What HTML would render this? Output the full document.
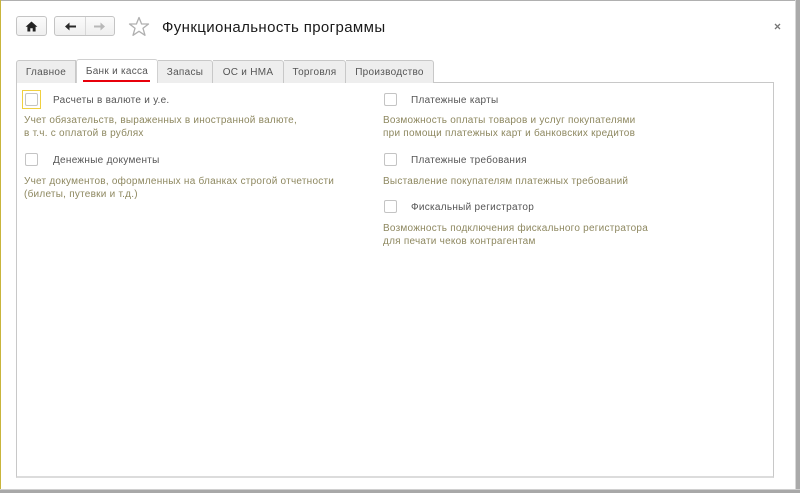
<!DOCTYPE html>
<html lang="ru">
<head>
<meta charset="utf-8">
<style>
html,body{margin:0;padding:0;background:#fff}
body{width:800px;height:493px;position:relative;overflow:hidden;font-family:"Liberation Sans",Arial,sans-serif;font-size:10px;color:#4a4a4a}
div{position:absolute;box-sizing:border-box;white-space:nowrap}
.lbl{color:#555;font-size:10px;line-height:12px;height:12px;letter-spacing:.28px}
.h{color:#8e8860;font-size:10px;line-height:12px;height:12px;letter-spacing:.24px}
.cb{width:13px;height:13px;border:1px solid #c4c4c4;border-radius:2px;background:#fff}
.tab{top:60px;height:23px;background:#eeeeee;border:1px solid #c8c8c8;border-bottom:0;border-left:0;border-radius:0 3px 0 0;text-align:center;font-size:10px;line-height:23px;color:#555;letter-spacing:.28px}
</style>
</head>
<body>
<!-- window frame -->
<div style="left:0;top:0;width:800px;height:1px;background:#b0b0b0"></div>
<div style="left:0;top:0;width:1px;height:489px;background:#c9b53c"></div>
<div style="left:795px;top:0;width:1px;height:493px;background:#d8d8d8"></div>
<div style="left:796px;top:0;width:4px;height:493px;background:#aaaaaa"></div>
<div style="left:0;top:489px;width:800px;height:1px;background:#d0d0d0"></div>
<div style="left:0;top:490px;width:800px;height:3px;background:#a8a8a8"></div>

<!-- nav buttons -->
<div style="left:16px;top:16px;width:31px;height:20px;border:1px solid #c4c4c4;border-radius:3px;background:linear-gradient(#fbfbfb,#efefef)"></div>
<svg style="position:absolute;left:25px;top:21px" width="13" height="11" viewBox="0 0 13 11"><path d="M6.5 0.5L0.6 5.8H2.4V10.5H5.3V7.3H7.7V10.5H10.6V5.8H12.4Z" fill="#222"/></svg>
<div style="left:54px;top:16px;width:61px;height:20px;border:1px solid #c4c4c4;border-radius:3px;background:linear-gradient(#fbfbfb,#efefef)"></div>
<div style="left:85px;top:17px;width:1px;height:18px;background:#d8d8d8"></div>
<svg style="position:absolute;left:64px;top:21px" width="13" height="11" viewBox="0 0 13 11"><path d="M1 5.5L5.5 1.5V4.5H12V6.5H5.5V9.5Z" fill="#2a2a2a"/></svg>
<svg style="position:absolute;left:93px;top:21px" width="13" height="11" viewBox="0 0 13 11"><path d="M12 5.5L7.5 1.5V4.5H1V6.5H7.5V9.5Z" fill="#b8b8b8"/></svg>
<!-- star -->
<svg style="position:absolute;left:128px;top:16px" width="22" height="21" viewBox="0 0 22 21"><path d="M11 1.5L13.6 8H20.5L15 12.3L17 19.3L11 15.3L5 19.3L7 12.3L1.5 8H8.4Z" fill="#fff" stroke="#b0b0b0" stroke-width="1.3" stroke-linejoin="round"/></svg>
<!-- title -->
<div style="left:162px;top:18px;font-size:15px;line-height:20px;height:20px;color:#1a1a1a;letter-spacing:0.38px">Функциональность программы</div>
<!-- close -->
<svg style="position:absolute;left:774px;top:23px" width="7" height="7" viewBox="0 0 7 7"><path d="M1 1L6 6M6 1L1 6" stroke="#777" stroke-width="1.3"/></svg>

<!-- panel -->
<div style="left:16px;top:82px;width:758px;height:396px;background:#fff;border:1px solid #c8c8c8;border-bottom:2px solid #dcdcdc"></div>

<!-- tabs -->
<div class="tab" style="left:16px;width:60px;border-left:1px solid #c8c8c8;border-radius:3px 0 0 0">Главное</div>
<div class="tab" style="left:158px;width:55px">Запасы</div>
<div class="tab" style="left:213px;width:71px">ОС и НМА</div>
<div class="tab" style="left:284px;width:62px">Торговля</div>
<div class="tab" style="left:346px;width:88px;border-radius:0 3px 0 0">Производство</div>
<div class="tab" style="left:76px;top:59px;width:82px;height:24px;background:#fff;border:1px solid #d0d0d0;border-bottom:0;border-radius:3px 3px 0 0;line-height:24px">Банк и касса</div>
<div style="left:83px;top:80px;width:67px;height:2px;background:#e8000b"></div>

<!-- left column -->
<div style="left:22px;top:90px;width:19px;height:19px;border:1px solid #f0d040;background:#fff"></div>
<div class="cb" style="left:25px;top:93px"></div>
<div class="lbl" style="left:53px;top:95px">Расчеты в валюте и у.е.</div>
<div class="h" style="left:24px;top:115px">Учет обязательств, выраженных в иностранной валюте,</div>
<div class="h" style="left:24px;top:128px">в т.ч. с оплатой в рублях</div>
<div class="cb" style="left:25px;top:153px"></div>
<div class="lbl" style="left:53px;top:155px">Денежные документы</div>
<div class="h" style="left:24px;top:176px">Учет документов, оформленных на бланках строгой отчетности</div>
<div class="h" style="left:24px;top:189px">(билеты, путевки и т.д.)</div>

<!-- right column -->
<div class="cb" style="left:384px;top:93px"></div>
<div class="lbl" style="left:411px;top:95px">Платежные карты</div>
<div class="h" style="left:383px;top:115px">Возможность оплаты товаров и услуг покупателями</div>
<div class="h" style="left:383px;top:128px">при помощи платежных карт и банковских кредитов</div>
<div class="cb" style="left:384px;top:153px"></div>
<div class="lbl" style="left:411px;top:155px">Платежные требования</div>
<div class="h" style="left:383px;top:176px">Выставление покупателям платежных требований</div>
<div class="cb" style="left:384px;top:200px"></div>
<div class="lbl" style="left:411px;top:202px">Фискальный регистратор</div>
<div class="h" style="left:383px;top:223px">Возможность подключения фискального регистратора</div>
<div class="h" style="left:383px;top:236px">для печати чеков контрагентам</div>
</body>
</html>
